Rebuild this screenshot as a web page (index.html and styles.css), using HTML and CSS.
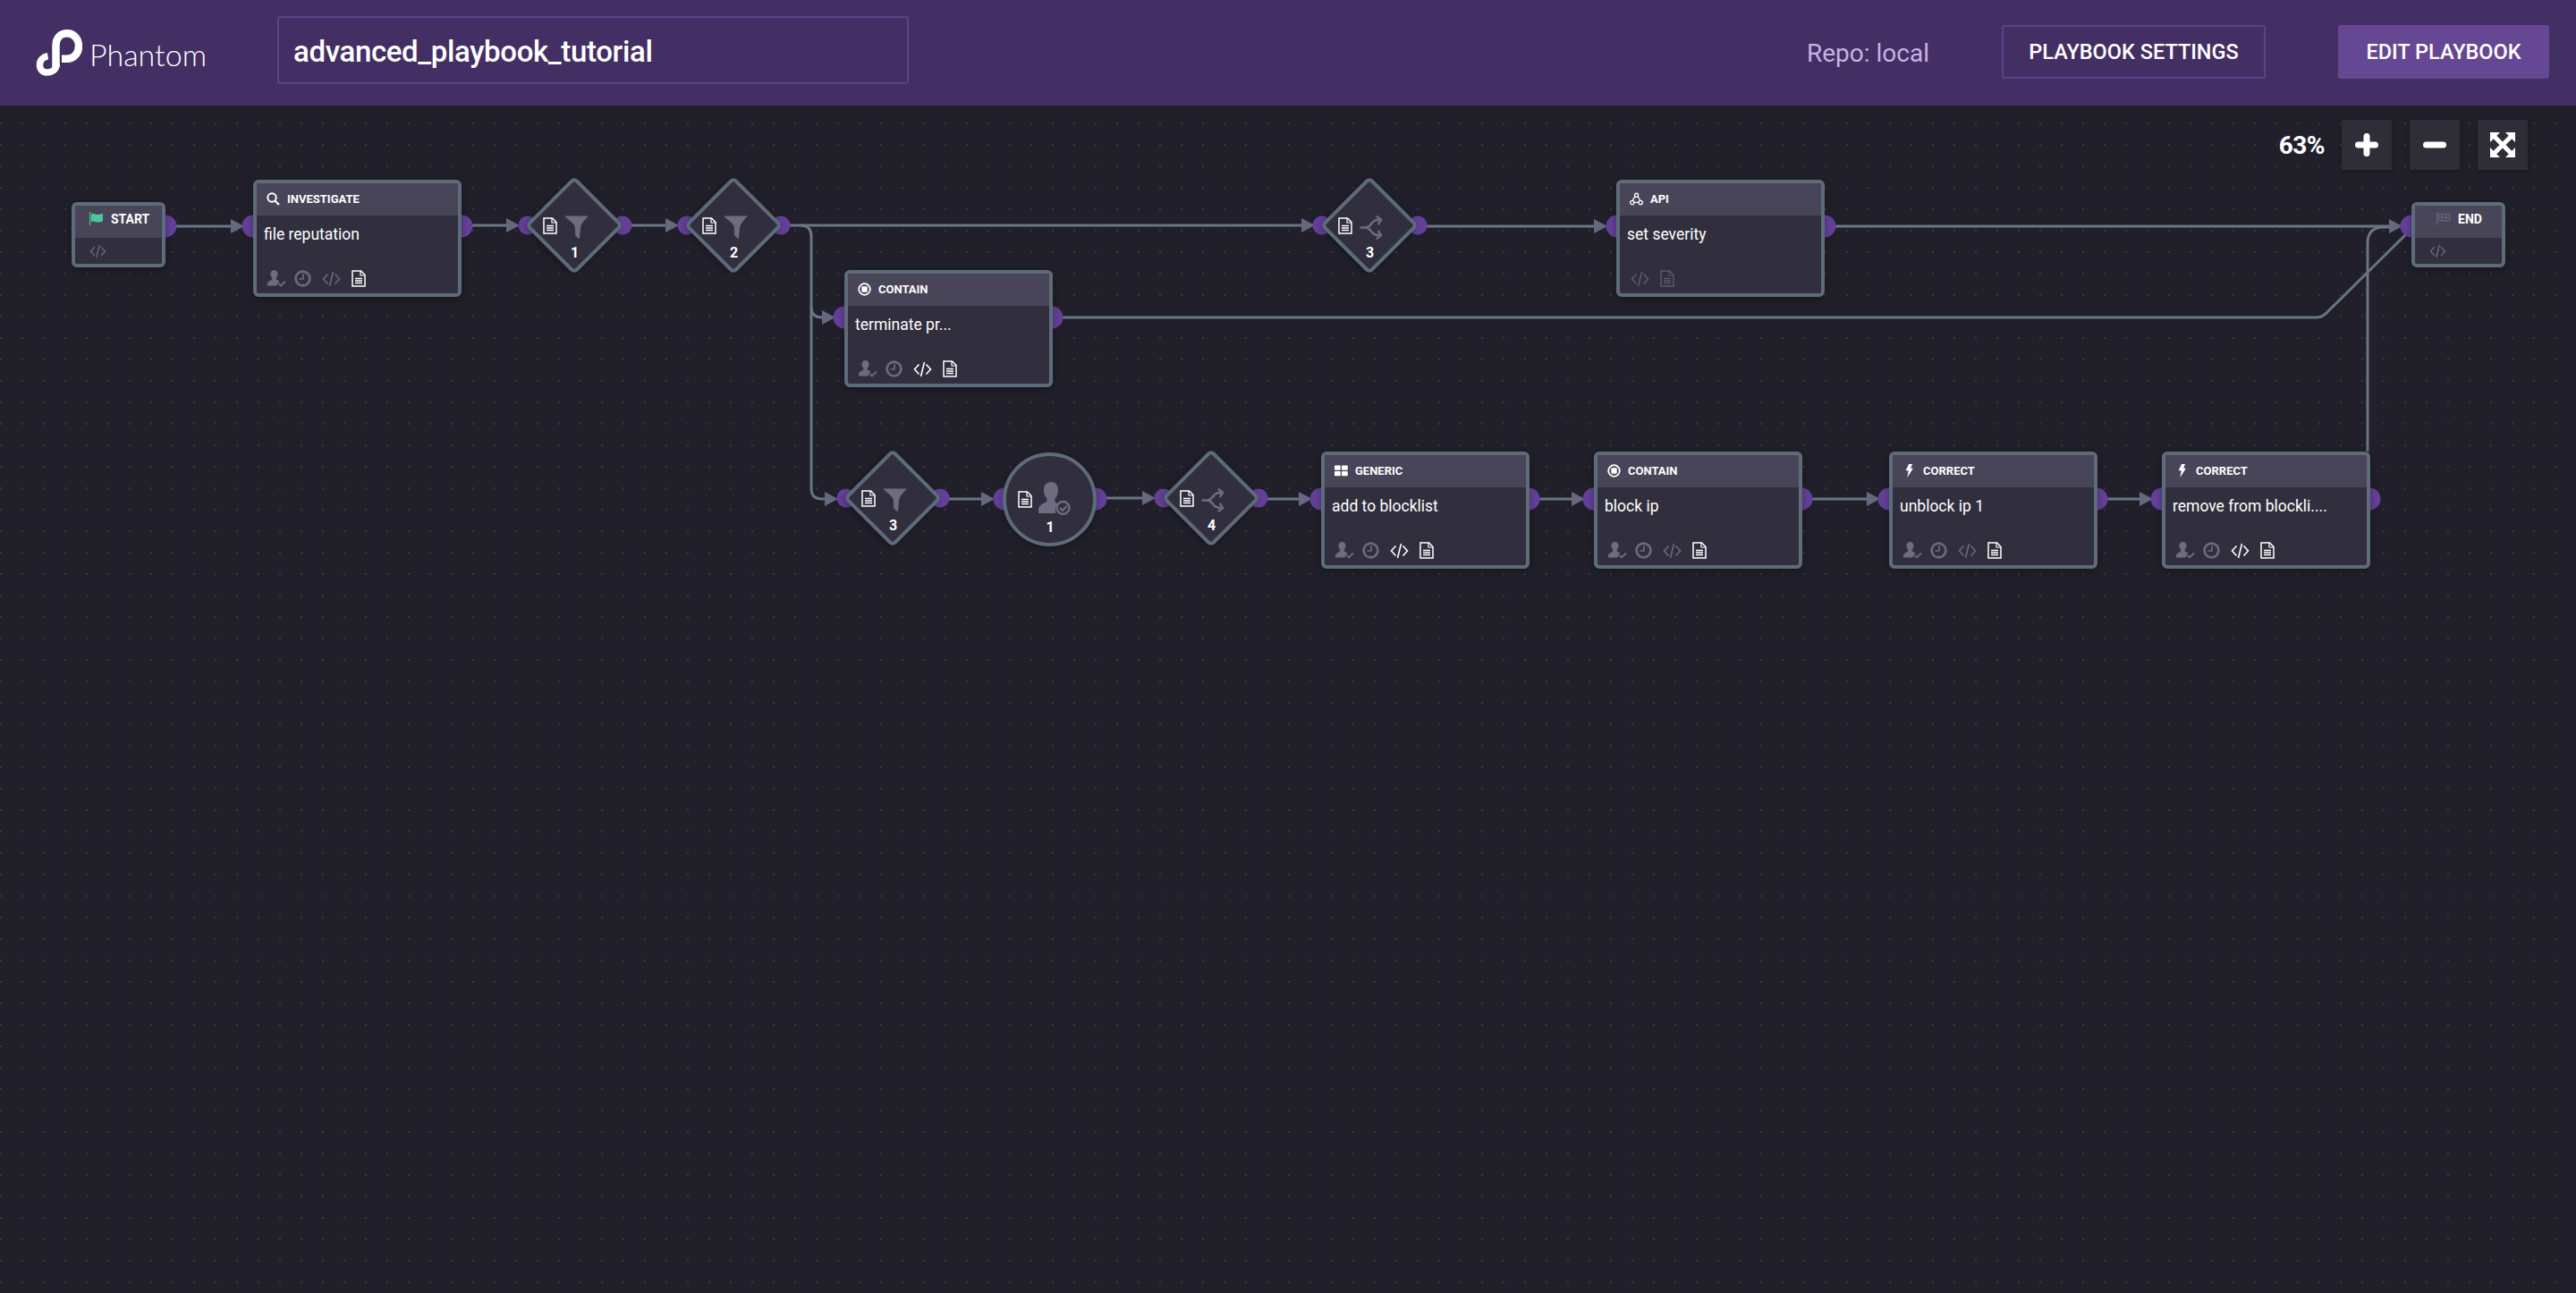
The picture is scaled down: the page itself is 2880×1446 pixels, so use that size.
FILE: index.html
```html
<!DOCTYPE html>
<html>
<head>
    <meta charset="UTF-8">
    <title>advanced_playbook_tutorial</title>
    <link rel="stylesheet" href="styles.css">
</head>
<body>
    <!-- icon sprite -->
    <svg class="sprite" xmlns="http://www.w3.org/2000/svg">
        <symbol id="i-doc" viewBox="0 0 16 19"><path d="M1 1h9.500l4.500 4.500V18H1z" fill="none" stroke="currentColor" stroke-width="1.500"/><path d="M10 1v5h5" fill="none" stroke="currentColor" stroke-width="1.200"/><path d="M4 9.500h8M4 12h8M4 14.500h8" stroke="currentColor" stroke-width="1.400"/></symbol>
        <symbol id="i-code" viewBox="0 0 21 18"><path d="M6.500 3.500 1.500 9l5 5.500M14.500 3.500l5 5.500-5 5.500M12.500 1 8.500 17" fill="none" stroke="currentColor" stroke-width="1.600"/></symbol>
        <symbol id="i-clock" viewBox="0 0 18 18"><circle cx="9" cy="9" r="7.500" fill="none" stroke="currentColor" stroke-width="2.600"/><path d="M9.500 4v5.500H5" fill="none" stroke="currentColor" stroke-width="1.600"/></symbol>
        <symbol id="i-user" viewBox="0 0 21 19"><path d="M7.500 0c2.600 0 4 1.800 4 4.300 0 2-.8 3.600-1.800 4.500v1.700c1 .6 2.500 1 3.600 1.700l-3 5.300H0v-1.800c0-2 1.500-3.300 3.300-4l2-1.100V8.800C4.200 7.900 3.500 6.300 3.500 4.300 3.500 1.800 5 0 7.500 0z" fill="currentColor"/><path d="M12.500 15l2.500 2.500 5-5" fill="none" stroke="currentColor" stroke-width="1.800"/></symbol>
        <symbol id="i-search" viewBox="0 0 15 15"><circle cx="6" cy="6" r="4.700" fill="none" stroke="currentColor" stroke-width="2"/><path d="M9.500 9.500 14 14" stroke="currentColor" stroke-width="2.200"/></symbol>
        <symbol id="i-stop" viewBox="0 0 15 15"><circle cx="7.500" cy="7.500" r="6.300" fill="none" stroke="currentColor" stroke-width="1.800"/><rect x="4.300" y="4.300" width="6.400" height="6.400" rx="1" fill="currentColor"/></symbol>
        <symbol id="i-api" viewBox="0 0 16 15"><path d="M6.500 4.500 3.500 9M9.500 4.500l3 4.500M5 11.700h6" stroke="currentColor" stroke-width="1.300"/><circle cx="8" cy="3" r="2.200" fill="none" stroke="currentColor" stroke-width="1.400"/><circle cx="3" cy="11.700" r="2.300" fill="none" stroke="currentColor" stroke-width="1.400"/><circle cx="13" cy="11.700" r="2.300" fill="none" stroke="currentColor" stroke-width="1.400"/></symbol>
        <symbol id="i-grid" viewBox="0 0 15 12"><rect width="6.800" height="5.200" rx=".8" fill="currentColor"/><rect x="8" width="6.800" height="5.200" rx=".8" fill="currentColor"/><rect y="6.600" width="6.800" height="5.200" rx=".8" fill="currentColor"/><rect x="8" y="6.600" width="6.800" height="5.200" rx=".8" fill="currentColor"/></symbol>
        <symbol id="i-bolt" viewBox="0 0 10 17"><path d="M4.500 0H9L6.800 5.500H10L2.500 17l1.700-8.800H.6z" fill="currentColor"/></symbol>
        <symbol id="i-flag" viewBox="0 0 16 15"><path d="M.7 0v15" stroke="currentColor" stroke-width="1.200"/><path d="M2 2.500c3-1.300 4.500.4 7 .4 2.200 0 4-.8 6-.9v8.500c-2 .5-3.800 1-6 1-2.500 0-4-1.500-7-.6z" fill="currentColor"/></symbol>
        <symbol id="i-checker" viewBox="0 0 17 15"><path d="M.7 0v15" stroke="currentColor" stroke-width="1.200"/><path d="M2.500 2c3-1 5 .5 7.500.5 2 0 4-.7 6-.6v7.800c-2 .2-4 .8-6 .8-2.500 0-4.500-1.300-7.500-.5zM2.500 5.900c3-1 5 .5 7.500.5s4-.7 6-.6M6.500 2v8M11.500 2.400v8" fill="none" stroke="currentColor" stroke-width="1.100"/></symbol>
        <symbol id="i-funnel" viewBox="0 0 26 26"><path d="M0 .5h26c-3.500 4-7.500 7-8.500 12.500-.6 3.500-.5 8-1.500 12.500-1.600-1.300-3.900-3.400-4.500-4.500V13C10.500 7.500 3.500 4.500 0 .5z" fill="currentColor"/></symbol>
        <symbol id="i-split" viewBox="0 0 27 28"><path d="M0 14h6c4 0 6-2.500 8-5.500 1.300-2 3-3.500 10-3.500M6 14c4 0 6 2.500 8 5.500 1.300 2 3 3.500 10 3.500M19 .8 24.500 5 21 10.500M19 27.200l5.500-4.200L21 17.500" fill="none" stroke="currentColor" stroke-width="2.600"/></symbol>
        <symbol id="i-expand" viewBox="0 0 28 28"><path d="M0 0h11L0 11zM28 0H17l11 11zM0 28h11L0 17zM28 28H17l11-11z" fill="currentColor"/><path d="M4 4l20 20M24 4 4 24" stroke="currentColor" stroke-width="5"/></symbol>
    </svg>

    <header class="topbar">
        <div class="brand">
            <svg class="brand-mark" viewBox="40 32 52 52">
                <path d="M62.500 74V50C62.500 41 68 36.200 75 36.200 83 36.200 88 43 88 50.500 88 59 82 64.800 75 64.800H69" fill="none" stroke="#fff" stroke-width="8.500"/>
                <path d="M63 71C63 77 58 80 52 80 47.500 80 44.500 76.500 44.500 71.500 44.500 66.500 48 62.800 53.500 61.800" fill="none" stroke="#fff" stroke-width="7.500"/>
            </svg>
            <span class="brand-name">Phantom</span>
        </div>
        <div class="title-box">advanced_playbook_tutorial</div>
        <span class="repo">Repo: local</span>
        <button class="btn btn-outline">PLAYBOOK SETTINGS</button>
        <button class="btn btn-solid">EDIT PLAYBOOK</button>
    </header>

    <main class="canvas">
        <!-- connectors and ports, in page coordinates -->
        <svg class="edges" viewBox="0 118 2880 1328">
            <g class="lines">
                <path d="M196 253H262"/>
                <path d="M527 252H570"/>
                <path d="M706 252H748"/>
                <path d="M883 252H1458"/>
                <path d="M1595 253H1786"/>
                <path d="M2050 253H2675"/>
                <path d="M895 252Q907 252 907 264V343Q907 355 919 355H924"/>
                <path d="M907 343V546Q907 558 919 558H926"/>
                <path d="M1187 355H2590Q2597 355 2603 348L2690 262"/>
                <path d="M1061 558H1101"/>
                <path d="M1237 557H1280"/>
                <path d="M1417 558H1456"/>
                <path d="M1720 558H1760"/>
                <path d="M2024 558H2090"/>
                <path d="M2355 558H2395"/>
                <path d="M2647 505V272Q2647 254 2665 254H2675"/>
            </g>
            <g class="arrows">
                <path d="M258 245l15 8-15 8z"/>
                <path d="M566 244l15 8-15 8z"/>
                <path d="M744 244l15 8-15 8z"/>
                <path d="M1455 244l15 8-15 8z"/>
                <path d="M1782 245l15 8-15 8z"/>
                <path d="M2671 245l15 8-15 8z"/>
                <path d="M919 347l15 8-15 8z"/>
                <path d="M922 550l15 8-15 8z"/>
                <path d="M1097 550l15 8-15 8z"/>
                <path d="M1277 549l15 8-15 8z"/>
                <path d="M1452 550l15 8-15 8z"/>
                <path d="M1757 550l15 8-15 8z"/>
                <path d="M2087 550l15 8-15 8z"/>
                <path d="M2392 550l15 8-15 8z"/>
            </g>
            <g class="ports">
                <circle cx="185" cy="253" r="12.500"/>
                <circle cx="283" cy="253" r="12.500"/><circle cx="516" cy="253" r="12.500"/>
                <circle cx="590" cy="252" r="10.500"/><circle cx="696" cy="252" r="10.500"/>
                <circle cx="768" cy="252" r="10.500"/><circle cx="873" cy="252" r="10.500"/>
                <circle cx="1478" cy="252" r="10.500"/><circle cx="1585" cy="252" r="10.500"/>
                <circle cx="1808" cy="253" r="12.500"/><circle cx="2040" cy="253" r="12.500"/>
                <circle cx="944" cy="355" r="12.500"/><circle cx="1176" cy="355" r="12.500"/>
                <circle cx="946" cy="557" r="10.500"/><circle cx="1051" cy="557" r="10.500"/>
                <circle cx="1123" cy="558" r="12.500"/><circle cx="1225" cy="558" r="12.500"/>
                <circle cx="1301" cy="557" r="10.500"/><circle cx="1407" cy="557" r="10.500"/>
                <circle cx="1477" cy="558" r="12.500"/><circle cx="1709" cy="558" r="12.500"/>
                <circle cx="1782" cy="558" r="12.500"/><circle cx="2014" cy="558" r="12.500"/>
                <circle cx="2112" cy="558" r="12.500"/><circle cx="2344" cy="558" r="12.500"/>
                <circle cx="2417" cy="558" r="12.500"/><circle cx="2649" cy="558" r="12.500"/>
                <circle cx="2696" cy="253" r="12.500"/>
            </g>
        </svg>

        <!-- start -->
        <div class="node node-small at-start">
            <div class="node-head"><svg class="head-icon flag-on"><use href="#i-flag"/></svg>START</div>
            <div class="node-tools"><svg class="ic-code"><use href="#i-code"/></svg></div>
        </div>

        <div class="node at-investigate">
            <div class="node-head"><svg class="head-icon"><use href="#i-search"/></svg>INVESTIGATE</div>
            <div class="node-name">file reputation</div>
            <div class="node-tools">
                <svg class="ic-user"><use href="#i-user"/></svg>
                <svg class="ic-clock"><use href="#i-clock"/></svg>
                <svg class="ic-code"><use href="#i-code"/></svg>
                <svg class="ic-doc on"><use href="#i-doc"/></svg>
            </div>
        </div>

        <div class="gate at-gate1">
            <svg class="ic-doc on"><use href="#i-doc"/></svg>
            <svg class="gate-icon"><use href="#i-funnel"/></svg>
            <span class="gate-num">1</span>
        </div>
        <div class="gate at-gate2">
            <svg class="ic-doc on"><use href="#i-doc"/></svg>
            <svg class="gate-icon"><use href="#i-funnel"/></svg>
            <span class="gate-num">2</span>
        </div>
        <div class="gate at-gate3">
            <svg class="ic-doc on"><use href="#i-doc"/></svg>
            <svg class="gate-icon"><use href="#i-split"/></svg>
            <span class="gate-num">3</span>
        </div>

        <div class="node at-api">
            <div class="node-head"><svg class="head-icon"><use href="#i-api"/></svg>API</div>
            <div class="node-name">set severity</div>
            <div class="node-tools">
                <svg class="ic-code dim"><use href="#i-code"/></svg>
                <svg class="ic-doc dim"><use href="#i-doc"/></svg>
            </div>
        </div>

        <div class="node at-contain">
            <div class="node-head"><svg class="head-icon"><use href="#i-stop"/></svg>CONTAIN</div>
            <div class="node-name">terminate pr...</div>
            <div class="node-tools">
                <svg class="ic-user"><use href="#i-user"/></svg>
                <svg class="ic-clock"><use href="#i-clock"/></svg>
                <svg class="ic-code on"><use href="#i-code"/></svg>
                <svg class="ic-doc on"><use href="#i-doc"/></svg>
            </div>
        </div>

        <!-- lower row -->
        <div class="gate at-gate4">
            <svg class="ic-doc on"><use href="#i-doc"/></svg>
            <svg class="gate-icon"><use href="#i-funnel"/></svg>
            <span class="gate-num">3</span>
        </div>

        <div class="prompt at-prompt">
            <svg class="ic-doc on"><use href="#i-doc"/></svg>
            <div class="prompt-user">
                <svg class="prompt-icon" viewBox="0 0 36 38"><path d="M14 0c5 0 8 3.500 8 9 0 4-1.500 7.500-3.500 9.500v4c1 .6 2.500 1.200 4 1.800-3 2-4.500 6-3 10.700H0v-3.500c0-4 3-6.500 6.500-8l3-1.800v-3C7.500 16.500 6 13 6 9c0-5.500 3-9 8-9z" fill="currentColor"/><circle cx="27.500" cy="29" r="7" fill="none" stroke="currentColor" stroke-width="2.500"/><path d="M24 29l3 3 4.500-5" fill="none" stroke="currentColor" stroke-width="2.500"/></svg>
                <span class="gate-num">1</span>
            </div>
        </div>

        <div class="gate at-gate5">
            <svg class="ic-doc on"><use href="#i-doc"/></svg>
            <svg class="gate-icon"><use href="#i-split"/></svg>
            <span class="gate-num">4</span>
        </div>

        <div class="node at-generic">
            <div class="node-head"><svg class="head-icon"><use href="#i-grid"/></svg>GENERIC</div>
            <div class="node-name">add to blocklist</div>
            <div class="node-tools">
                <svg class="ic-user"><use href="#i-user"/></svg>
                <svg class="ic-clock"><use href="#i-clock"/></svg>
                <svg class="ic-code on"><use href="#i-code"/></svg>
                <svg class="ic-doc on"><use href="#i-doc"/></svg>
            </div>
        </div>

        <div class="node at-contain2">
            <div class="node-head"><svg class="head-icon"><use href="#i-stop"/></svg>CONTAIN</div>
            <div class="node-name">block ip</div>
            <div class="node-tools">
                <svg class="ic-user"><use href="#i-user"/></svg>
                <svg class="ic-clock"><use href="#i-clock"/></svg>
                <svg class="ic-code"><use href="#i-code"/></svg>
                <svg class="ic-doc on"><use href="#i-doc"/></svg>
            </div>
        </div>

        <div class="node at-correct1">
            <div class="node-head"><svg class="head-icon"><use href="#i-bolt"/></svg>CORRECT</div>
            <div class="node-name">unblock ip 1</div>
            <div class="node-tools">
                <svg class="ic-user"><use href="#i-user"/></svg>
                <svg class="ic-clock"><use href="#i-clock"/></svg>
                <svg class="ic-code"><use href="#i-code"/></svg>
                <svg class="ic-doc on"><use href="#i-doc"/></svg>
            </div>
        </div>

        <div class="node at-correct2">
            <div class="node-head"><svg class="head-icon"><use href="#i-bolt"/></svg>CORRECT</div>
            <div class="node-name">remove from blockli....</div>
            <div class="node-tools">
                <svg class="ic-user"><use href="#i-user"/></svg>
                <svg class="ic-clock"><use href="#i-clock"/></svg>
                <svg class="ic-code on"><use href="#i-code"/></svg>
                <svg class="ic-doc on"><use href="#i-doc"/></svg>
            </div>
        </div>

        <!-- end -->
        <div class="node node-small node-end at-end">
            <div class="node-head"><svg class="head-icon flag-off"><use href="#i-checker"/></svg>END</div>
            <div class="node-tools"><svg class="ic-code"><use href="#i-code"/></svg></div>
        </div>

        <!-- zoom controls -->
        <div class="zoom-bar">
            <span class="zoom-level">63%</span>
            <div class="zoom-btn">
                <svg class="zoom-icon" viewBox="0 0 26 26"><path d="M13 3.500v19M3.500 13h19" stroke="#fff" stroke-width="7" stroke-linecap="round"/></svg>
            </div>
            <div class="zoom-btn">
                <svg class="zoom-icon" viewBox="0 0 26 26"><path d="M3.500 13h19" stroke="#fff" stroke-width="7" stroke-linecap="round"/></svg>
            </div>
            <div class="zoom-btn">
                <svg class="zoom-icon expand"><use href="#i-expand"/></svg>
            </div>
        </div>
    </main>
</body>
</html>
```

FILE: styles.css
```css
html, body {
    margin: 0;
    padding: 0;
    height: 100%;
    overflow: hidden;
}

body {
    display: flex;
    flex-direction: column;
    font-family: Roboto, Arial, sans-serif;
    background: #21202a;
    color: #fff;
}

.sprite {
    display: none;
}

/* top bar */
.topbar {
    flex: 0 0 118px;
    display: flex;
    align-items: center;
    background: #432f63;
    padding: 0 30px 0 40px;
}

.brand {
    display: flex;
    align-items: center;
    gap: 9px;
    width: 270px;
}

.brand-mark {
    width: 52px;
    height: 52px;
}

.brand-name {
    font-family: Lato, sans-serif;
    font-weight: 300;
    font-size: 34px;
    margin-top: 2px;
    margin-left: -1px;
}

.title-box {
    width: 706px;
    height: 76px;
    box-sizing: border-box;
    margin-bottom: 6px;
    border: 2px solid #5c4389;
    border-radius: 3px;
    padding-left: 16px;
    line-height: 75px;
    font-size: 33px;
    font-weight: 500;
    letter-spacing: -0.35px;
}

.repo {
    margin-left: auto;
    margin-right: 81px;
    font-size: 28px;
    color: #c9b1e4;
}

.btn {
    height: 60px;
    box-sizing: border-box;
    margin-bottom: 2px;
    border-radius: 3px;
    font-family: Roboto, Arial, sans-serif;
    font-size: 23.500px;
    font-weight: 500;
    color: #fff;
}

.btn-outline {
    width: 295px;
    background: transparent;
    border: 2px solid #5c4389;
    margin-right: 81px;
}

.btn-solid {
    width: 236px;
    background: #654793;
    border: 0;
}

/* canvas */
.canvas {
    flex: 1;
    position: relative;
    background-image: radial-gradient(circle, #39383f 1px, transparent 1.2px);
    background-size: 24px 24px;
    background-position: 13px 8px;
}

.edges {
    position: absolute;
    left: 0;
    top: 0;
    width: 2880px;
    height: 1328px;
}

.lines path {
    fill: none;
    stroke: #6a7583;
    stroke-width: 3;
}

.arrows path {
    fill: #67677f;
}

.ports circle {
    fill: #65409a;
}

/* action nodes */
.node {
    position: absolute;
    display: flex;
    flex-direction: column;
    box-sizing: border-box;
    width: 233px;
    height: 131px;
    background: #312f3d;
    border: 4px solid #5d6b7a;
    border-radius: 6px;
    box-shadow: 0 2px 8px rgba(0, 0, 0, 0.35);
}

.node-head {
    flex: 0 0 36px;
    box-sizing: border-box;
    display: flex;
    align-items: center;
    gap: 8px;
    padding: 0 0 2px 11px;
    background: #484558;
    font-size: 13px;
    font-weight: 700;
}

.head-icon {
    width: 15px;
    height: 15px;
}

.node-name {
    flex: 1;
    padding: 10px 8px 0;
    font-size: 17.500px;
    line-height: 22px;
}

.node-tools {
    display: flex;
    align-items: center;
    gap: 11px;
    padding: 0 12px 7px;
    color: #6b6a7d;
}

.ic-user {
    width: 21px;
    height: 19px;
    color: #6f6b80;
}

.ic-clock {
    width: 19px;
    height: 19px;
    margin-left: -2px;
    margin-right: 1px;
    color: #6a6a7f;
}

.ic-code {
    width: 21px;
    height: 18px;
    color: #6b6a7d;
}

.ic-doc {
    width: 16px;
    height: 19px;
    margin-left: 1px;
    color: #6b6a7d;
}

.on {
    color: #fff;
}

.dim {
    color: #5b5a6c;
}

.node-small {
    width: 105px;
    height: 73px;
}

.node-small .node-head {
    padding: 0 0 7px 16px;
    font-size: 14px;
}

.node-small .head-icon {
    width: 16px;
    height: 15px;
}

.node-small .node-tools {
    flex: 1;
    padding: 0 15px;
}

.node-small .ic-code {
    width: 21px;
    height: 16px;
}

.flag-on {
    color: #4bc99b;
}

.flag-off {
    color: #6a6a7d;
}

.node-end .node-head {
    padding-left: 24px;
}

/* decision gates: rotated square behind the content */
.gate {
    position: absolute;
    width: 106px;
    height: 106px;
}

.gate::before {
    content: '';
    position: absolute;
    left: 14px;
    top: 14px;
    width: 78px;
    height: 78px;
    box-sizing: border-box;
    background: #312f3d;
    border: 4px solid #5d6b7a;
    border-radius: 6px;
    transform: rotate(45deg);
    box-shadow: 0 2px 8px rgba(0, 0, 0, 0.35);
}

.gate .ic-doc {
    position: absolute;
    left: 18px;
    top: 44px;
    margin: 0;
}

.gate-icon {
    position: absolute;
    left: 42px;
    top: 42px;
    width: 27px;
    height: 27px;
    color: #6f6b80;
}

.gate-num {
    position: absolute;
    left: 1px;
    right: 0;
    top: 75px;
    text-align: center;
    font-size: 16px;
    font-weight: 700;
    line-height: 18px;
}

/* prompt node */
.prompt {
    position: absolute;
    width: 105px;
    height: 105px;
    box-sizing: border-box;
    background: #312f3d;
    border: 4px solid #5d6b7a;
    border-radius: 50%;
    box-shadow: 0 2px 8px rgba(0, 0, 0, 0.35);
}

.prompt .ic-doc {
    position: absolute;
    left: 13px;
    top: 39px;
    margin: 0;
}

.prompt-user {
    position: absolute;
    left: 0;
    top: 0;
    right: 0;
    bottom: 0;
}

.prompt-icon {
    position: absolute;
    left: 36px;
    top: 29px;
    width: 36px;
    height: 38px;
    color: #6f6b80;
}

.prompt .gate-num {
    top: 71px;
}

/* node places on the canvas */
.at-start { left: 80px; top: 108px; }
.at-investigate { left: 283px; top: 83px; }
.at-gate1 { left: 589px; top: 81px; }
.at-gate2 { left: 767px; top: 81px; }
.at-gate3 { left: 1478px; top: 81px; }
.at-api { left: 1807px; top: 83px; }
.at-contain { left: 944px; top: 184px; }
.at-gate4 { left: 945px; top: 386px; }
.at-prompt { left: 1121px; top: 388px; }
.at-gate5 { left: 1301px; top: 386px; }
.at-generic { left: 1477px; top: 387px; }
.at-contain2 { left: 1782px; top: 387px; }
.at-correct1 { left: 2112px; top: 387px; }
.at-correct2 { left: 2417px; top: 387px; }
.at-end { left: 2696px; top: 108px; }

/* zoom controls */
.zoom-bar {
    position: absolute;
    right: 54px;
    top: 16px;
    display: flex;
    align-items: center;
    gap: 20px;
}

.zoom-level {
    font-size: 28px;
    font-weight: 700;
    letter-spacing: -0.5px;
    margin-right: -1px;
}

.zoom-btn {
    display: flex;
    align-items: center;
    justify-content: center;
    width: 56px;
    height: 56px;
    background: #2e2d38;
    box-shadow: 0 2px 6px rgba(0, 0, 0, 0.3);
}

.zoom-icon {
    width: 26px;
    height: 26px;
}

.zoom-icon.expand {
    width: 28px;
    height: 28px;
    color: #fff;
}
```
